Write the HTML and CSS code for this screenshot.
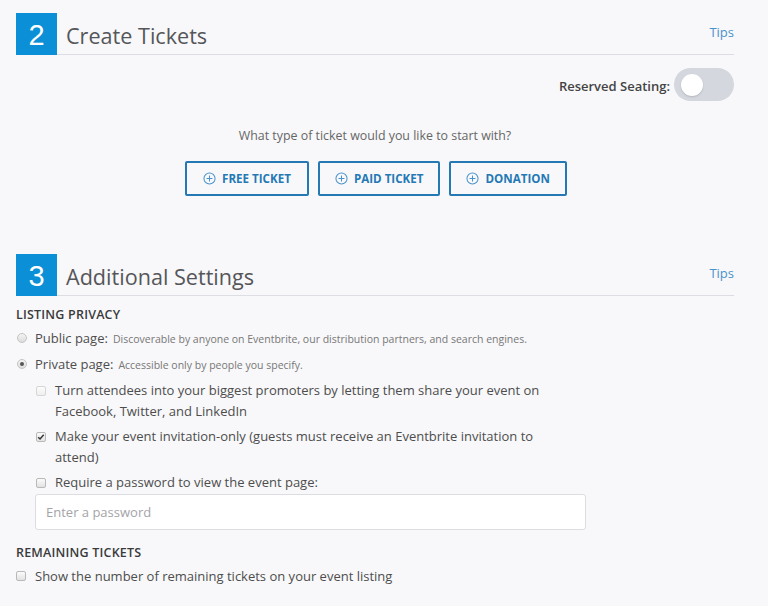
FILE: index.html
```html
<!DOCTYPE html>
<html>
<head>
<meta charset="utf-8">
<link rel="stylesheet" href="styles.css">
</head>
<body>
<div class="page">
  <section class="sec sec-tickets">
    <div class="sec-head">
      <div class="sec-num">2</div>
      <div class="sec-bar">
        <h2 class="sec-title">Create Tickets</h2>
        <a class="tips">Tips</a>
      </div>
    </div>
    <div class="seating">
      <span class="seating-label">Reserved Seating:</span>
      <span class="toggle"><span class="knob"></span></span>
    </div>
    <p class="question">What type of ticket would you like to start with?</p>
    <div class="btns">
      <button class="tbtn"><svg class="plus" viewBox="0 0 14 14" width="13" height="13"><circle cx="7" cy="7" r="6" fill="none" stroke="currentColor" stroke-width="1.1"/><path d="M7 3.8v6.4M3.8 7h6.4" stroke="currentColor" stroke-width="1.1"/></svg>FREE TICKET</button>
      <button class="tbtn"><svg class="plus" viewBox="0 0 14 14" width="13" height="13"><circle cx="7" cy="7" r="6" fill="none" stroke="currentColor" stroke-width="1.1"/><path d="M7 3.8v6.4M3.8 7h6.4" stroke="currentColor" stroke-width="1.1"/></svg>PAID TICKET</button>
      <button class="tbtn"><svg class="plus" viewBox="0 0 14 14" width="13" height="13"><circle cx="7" cy="7" r="6" fill="none" stroke="currentColor" stroke-width="1.1"/><path d="M7 3.8v6.4M3.8 7h6.4" stroke="currentColor" stroke-width="1.1"/></svg>DONATION</button>
    </div>
  </section>

  <section class="sec sec-settings">
    <div class="sec-head">
      <div class="sec-num">3</div>
      <div class="sec-bar">
        <h2 class="sec-title">Additional Settings</h2>
        <a class="tips">Tips</a>
      </div>
    </div>

    <h3 class="group-title">LISTING PRIVACY</h3>
    <div class="radio-row">
      <span class="radio"></span>
      <span class="opt">Public page:</span>
      <span class="desc">Discoverable by anyone on Eventbrite, our distribution partners, and search engines.</span>
    </div>
    <div class="radio-row">
      <span class="radio checked"></span>
      <span class="opt">Private page:</span>
      <span class="desc">Accessible only by people you specify.</span>
    </div>

    <div class="sub">
      <div class="check-row">
        <span class="box disabled"></span>
        <span class="check-text">Turn attendees into your biggest promoters by letting them share your event on Facebook, Twitter, and LinkedIn</span>
      </div>
      <div class="check-row">
        <span class="box checked"><svg viewBox="0 0 10 10" width="8" height="8"><path d="M1.5 5.2l2.3 2.3 4.6-5.2" fill="none" stroke="#333" stroke-width="1.8"/></svg></span>
        <span class="check-text">Make your event invitation-only (guests must receive an Eventbrite invitation to attend)</span>
      </div>
      <div class="check-row">
        <span class="box"></span>
        <span class="check-text">Require a password to view the event page:</span>
      </div>
      <input class="pw" type="text" placeholder="Enter a password">
    </div>

    <h3 class="group-title remaining">REMAINING TICKETS</h3>
    <div class="check-row single">
      <span class="box"></span>
      <span class="check-text">Show the number of remaining tickets on your event listing</span>
    </div>
  </section>
</div>
</body>
</html>
```
FILE: styles.css
```css
* { box-sizing: border-box; }
html, body { margin: 0; padding: 0; }
body {
  background: #f8f8fa;
  font-family: "Open Sans", "Liberation Sans", Arial, sans-serif;
  font-size: 13px;
  color: #4d4d4d;
  width: 768px;
  height: 606px;
  overflow: hidden;
}
.page {
  padding: 13px 34px 0 16px;
}
.sec-head {
  display: flex;
  align-items: stretch;
  height: 42px;
}
.sec-num {
  width: 41px;
  height: 42px;
  background: #0b8fd6;
  color: #fff;
  font-family: "Liberation Sans", Arial, sans-serif;
  font-size: 29px;
  line-height: 44px;
  text-align: center;
  flex: none;
}
.sec-bar {
  flex: 1;
  display: flex;
  align-items: center;
  justify-content: space-between;
  border-bottom: 1px solid #dcdee4;
  padding-left: 9px;
}
.sec-title {
  margin: 0;
  font-weight: normal;
  font-size: 21.6px;
  color: #555659;
  line-height: 26px;
  padding-top: 4px;
}
.tips {
  color: #4a92cc;
  font-size: 13px;
  padding-bottom: 4px;
  cursor: pointer;
}
.seating {
  display: flex;
  justify-content: flex-end;
  align-items: center;
  margin-top: 13px;
}
.seating-label {
  font-weight: 600;
  color: #444;
  font-size: 13px;
  margin-right: 4px;
  padding-top: 2px;
}
.toggle {
  width: 60px;
  height: 33px;
  border-radius: 17px;
  background: #d4d7de;
  display: flex;
  align-items: center;
  padding-left: 7px;
}
.knob {
  width: 22px;
  height: 22px;
  border-radius: 50%;
  background: #fff;
  box-shadow: 0 1px 2px rgba(0,0,0,0.15);
}
.question {
  margin: 27px 0 0;
  text-align: center;
  color: #666;
  font-size: 12.4px;
  line-height: 16px;
}
.btns {
  display: flex;
  justify-content: center;
  gap: 9px;
  margin-top: 17px;
  padding-left: 2px;
}
.tbtn {
  height: 35px;
  display: flex;
  align-items: center;
  gap: 6px;
  padding: 0 15px;
  background: transparent;
  border: 2px solid #2479b5;
  border-radius: 2px;
  color: #2479b5;
  font-family: "Open Sans", "Liberation Sans", Arial, sans-serif;
  font-weight: 700;
  font-size: 11.6px;
  cursor: pointer;
}
.tbtn:first-child { padding: 0 16px; }
.plus { color: #4a92cc; flex: none; }

.sec-settings { margin-top: 58px; }

.group-title {
  margin: 9px 0 0;
  font-size: 12.5px;
  font-weight: 600;
  color: #3a3a3a;
  line-height: 20px;
  letter-spacing: 0.2px;
}
.radio-row {
  display: flex;
  align-items: center;
  height: 26px;
}
.radio {
  width: 10px;
  height: 10px;
  border-radius: 50%;
  border: 1px solid #c4c4c4;
  background: linear-gradient(#f4f4f4, #dcdcdc);
  margin-left: 1px;
  margin-right: 8px;
  flex: none;
  display: flex;
  align-items: center;
  justify-content: center;
}
.radio.checked::after {
  content: "";
  width: 4px;
  height: 4px;
  border-radius: 50%;
  background: #555;
}
.opt { color: #4d4d4d; margin-right: 5px; }
.desc { font-size: 10.5px; color: #777; padding-top: 1px; }

.sub {
  padding-left: 20px;
  margin-top: 3px;
}
.check-row {
  display: flex;
  align-items: flex-start;
  line-height: 21px;
  margin-bottom: 4px;
}
.check-text { max-width: 495px; }
.box {
  width: 10px;
  height: 10px;
  border: 1px solid #b9b9b9;
  border-radius: 2px;
  background: linear-gradient(#fbfbfb, #e2e2e2);
  margin-top: 6px;
  margin-right: 9px;
  flex: none;
  display: flex;
  align-items: center;
  justify-content: center;
}
.box.disabled {
  border-color: #d6d6d6;
  background: linear-gradient(#fcfcfc, #efefef);
}
.pw {
  display: block;
  width: 551px;
  height: 36px;
  margin: -3px 0 0 -1px;
  border: 1px solid #dcdde2;
  border-radius: 3px;
  background: #fff;
  padding: 0 10px;
  font-family: "Open Sans", "Liberation Sans", Arial, sans-serif;
  font-size: 13px;
  color: #444;
  outline: none;
}
.pw::placeholder { color: #a4a4a8; }
.remaining { margin-top: 13px; }
.check-row.single { margin-top: 3px; }
.check-row.single .box { margin-top: 5px; }
```
